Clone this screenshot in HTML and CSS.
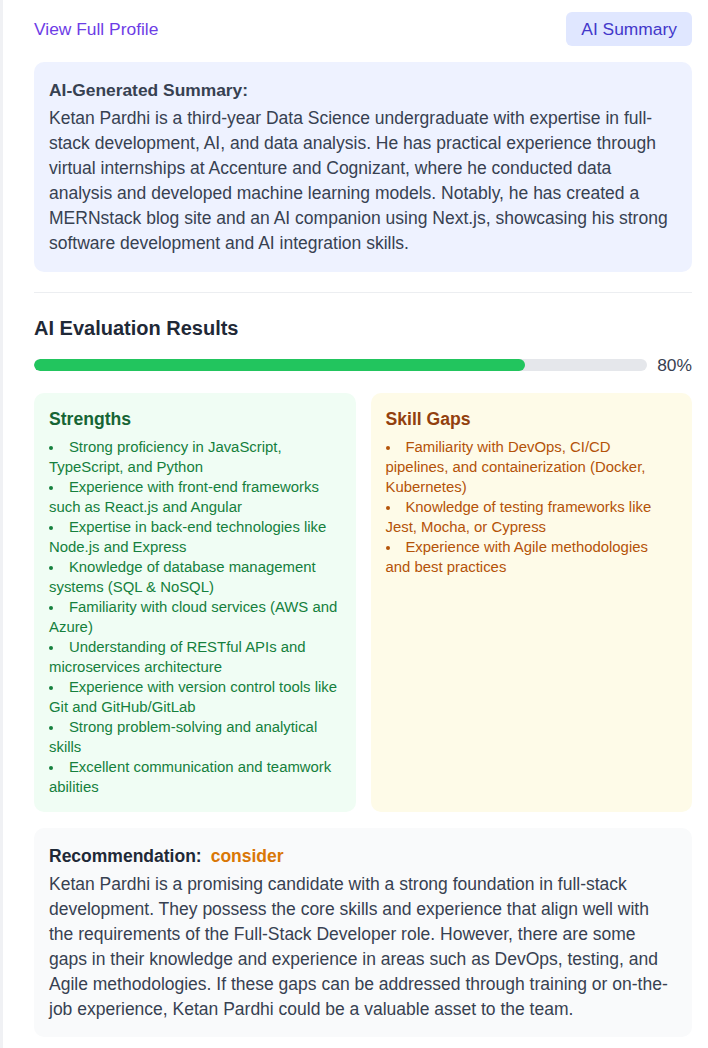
FILE: index.html
```html
<!DOCTYPE html>
<html>
<head>
<meta charset="utf-8">
<link rel="stylesheet" href="styles.css">
</head>
<body>
<div class="panel">
  <div class="top-row">
    <a class="profile-link" href="#">View Full Profile</a>
    <button class="summary-btn">AI Summary</button>
  </div>

  <section class="summary-box">
    <h3 class="summary-title">AI-Generated Summary:</h3>
    <p class="summary-text">Ketan Pardhi is a third-year Data Science undergraduate with expertise in full-stack development, AI, and data analysis. He has practical experience through virtual internships at Accenture and Cognizant, where he conducted data analysis and developed machine learning models. Notably, he has created a MERNstack blog site and an AI companion using Next.js, showcasing his strong software development and AI integration skills.</p>
  </section>

  <section class="evaluation">
    <h2 class="eval-title">AI Evaluation Results</h2>
    <div class="score-row">
      <div class="track"><div class="fill" style="width:80%"></div></div>
      <span class="score">80%</span>
    </div>

    <div class="cards">
      <div class="card strengths">
        <h4 class="card-title">Strengths</h4>
        <ul class="card-list">
          <li>Strong proficiency in JavaScript, TypeScript, and Python</li>
          <li>Experience with front-end frameworks such as React.js and Angular</li>
          <li>Expertise in back-end technologies like Node.js and Express</li>
          <li>Knowledge of database management systems (SQL &amp; NoSQL)</li>
          <li>Familiarity with cloud services (AWS and Azure)</li>
          <li>Understanding of RESTful APIs and microservices architecture</li>
          <li>Experience with version control tools like Git and GitHub/GitLab</li>
          <li>Strong problem-solving and analytical skills</li>
          <li>Excellent communication and teamwork abilities</li>
        </ul>
      </div>
      <div class="card gaps">
        <h4 class="card-title">Skill Gaps</h4>
        <ul class="card-list">
          <li>Familiarity with DevOps, CI/CD pipelines, and containerization (Docker, Kubernetes)</li>
          <li>Knowledge of testing frameworks like Jest, Mocha, or Cypress</li>
          <li>Experience with Agile methodologies and best practices</li>
        </ul>
      </div>
    </div>

    <div class="recommendation">
      <div class="rec-head"><span class="rec-label">Recommendation:</span><span class="rec-value">consider</span></div>
      <p class="rec-text">Ketan Pardhi is a promising candidate with a strong foundation in full-stack development. They possess the core skills and experience that align well with the requirements of the Full-Stack Developer role. However, there are some gaps in their knowledge and experience in areas such as DevOps, testing, and Agile methodologies. If these gaps can be addressed through training or on-the-job experience, Ketan Pardhi could be a valuable asset to the team.</p>
    </div>
  </section>
</div>
</body>
</html>
```

FILE: styles.css
```css
* { box-sizing: border-box; }
html, body { margin: 0; padding: 0; background: #ffffff; }
body {
  font-family: "Liberation Sans", Arial, sans-serif;
  color: #374151;
}
.panel {
  border-left: 3px solid #f0f1f4;
  min-height: 1048px;
  padding: 12px 16px 12px 31px;
}
.top-row {
  display: flex;
  justify-content: space-between;
  align-items: center;
  height: 34px;
  margin-bottom: 16px;
}
.profile-link {
  color: #6d3de6;
  text-decoration: none;
  font-size: 17.4px;
}
.summary-btn {
  background: #e0e7ff;
  color: #4338ca;
  border: none;
  border-radius: 6px;
  font-family: inherit;
  font-size: 17.4px;
  height: 34px;
  padding: 0 15px;
}
.summary-box {
  background: #eef2ff;
  border-radius: 10px;
  padding: 16px 15px 16px 15px;
}
.summary-title {
  margin: 0 0 4px 0;
  font-size: 17.4px;
  line-height: 24px;
  font-weight: 700;
  color: #374151;
}
.summary-text {
  margin: 0;
  font-size: 17.5px;
  line-height: 25px;
  color: #374151;
}
.evaluation {
  margin-top: 20px;
  border-top: 1px solid #eceef1;
  padding-top: 21px;
}
.eval-title {
  margin: 0 0 11px 0;
  font-size: 20px;
  line-height: 28px;
  font-weight: 700;
  color: #1f2937;
}
.score-row {
  display: flex;
  align-items: center;
  gap: 10px;
  height: 24px;
  margin-bottom: 16px;
}
.track {
  flex: 1;
  height: 12px;
  background: #e5e7eb;
  border-radius: 6px;
  overflow: hidden;
}
.fill {
  height: 100%;
  background: #22c55e;
  border-radius: 6px;
}
.score {
  font-size: 17.4px;
  color: #374151;
}
.cards {
  display: grid;
  grid-template-columns: 1fr 1fr;
  gap: 15px;
  margin-bottom: 16px;
}
.card {
  border-radius: 10px;
  padding: 14px 17px 15px 15px;
}
.strengths { background: #f0fdf4; }
.gaps { background: #fefbe8; }
.card-title {
  margin: 0 0 6px 0;
  font-size: 17.6px;
  line-height: 24px;
  font-weight: 700;
}
.strengths .card-title { color: #166534; }
.gaps .card-title { color: #92400e; }
.card-list {
  margin: 0;
  padding: 0;
  list-style: disc inside;
  font-size: 14.9px;
  line-height: 20px;
}
.strengths .card-list { color: #15803d; }
.gaps .card-list { color: #b45309; }
.recommendation {
  background: #f9fafb;
  border-radius: 10px;
  padding: 16px 15px 15px 15px;
}
.rec-head {
  display: flex;
  gap: 9px;
  font-size: 17.5px;
  line-height: 24px;
  font-weight: 700;
  margin-bottom: 4px;
}
.rec-label { color: #1f2937; }
.rec-value { color: #d97706; }
.rec-text {
  margin: 0;
  font-size: 17.5px;
  line-height: 25px;
  color: #374151;
}
```
